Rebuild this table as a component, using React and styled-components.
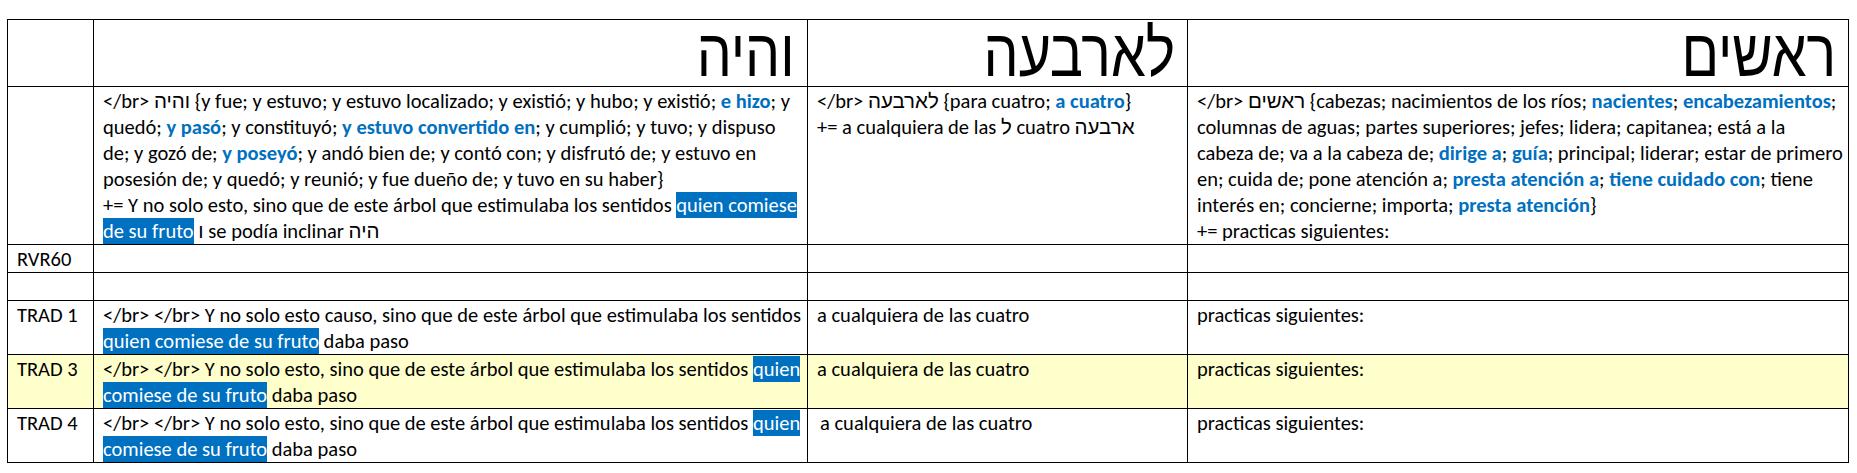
import React from 'react'
import styled, { createGlobalStyle } from 'styled-components'

const GlobalStyle = createGlobalStyle`
  body {
    margin: 0;
    background: #ffffff;
    font-family: Calibri, Carlito, Lato, 'Liberation Sans', sans-serif;
  }
`

const Page = styled.div`
  padding: 19px 0 0 7px;
`

const Sheet = styled.table`
  border-collapse: collapse;
  table-layout: fixed;
  width: 1841px;
  font-size: 20.5px;
  line-height: 26px;
  color: #000000;
`

const HeadCell = styled.th`
  height: 66px;
  padding: 0 12px 0 8px;
  border: 1px solid #000000;
  text-align: right;
  vertical-align: bottom;
  font-family: 'Liberation Sans', 'DejaVu Sans', sans-serif;
  font-weight: normal;
  font-size: 66px;
  line-height: 66px;
`

// the Hebrew face in the reference is narrower than Arial's
const HeadWord = styled.span`
  display: inline-block;
  transform: scaleX(0.84);
  transform-origin: right center;
`

const Row = styled.tr`
  background: ${(p) => p.$bg || 'transparent'};
`

const Cell = styled.td`
  padding: 1px 6px 0 ${(p) => p.$indent || 9}px;
  border: 1px solid #000000;
  vertical-align: top;
  white-space: nowrap;
  overflow: hidden;
`

const Line = styled.div`
  height: 26px;
`

const Blue = styled.b`
  color: #0070c0;
  font-weight: 700;
`

const Mark = styled.span`
  background: #0070c0;
  color: #ffffff;
`

// **bold blue** and [[highlighted]] markers
const Rich = ({ text }) =>
  text.split(/(\*\*.+?\*\*|\[\[.+?\]\])/).map((part, i) => {
    if (part.startsWith('**')) return <Blue key={i}>{part.slice(2, -2)}</Blue>
    if (part.startsWith('[[')) return <Mark key={i}>{part.slice(2, -2)}</Mark>
    return <React.Fragment key={i}>{part}</React.Fragment>
  })

const Lines = ({ lines }) =>
  lines.length ? lines.map((l, i) => <Line key={i}><Rich text={l} /></Line>) : <Line>{'\u00a0'}</Line>

const heads = ['והיה', 'לארבעה', 'ראשים']

const defs = [
  [
    '</br> והיה {y fue; y estuvo; y estuvo localizado; y existió; y hubo; y existió; **e hizo**; y',
    'quedó; **y pasó**; y constituyó; **y estuvo convertido en**; y cumplió; y tuvo; y dispuso',
    'de; y gozó de; **y poseyó**; y andó bien de; y contó con; y disfrutó de; y estuvo en',
    'posesión de; y quedó; y reunió; y fue dueño de; y tuvo en su haber}',
    '+= Y no solo esto, sino que de este árbol que estimulaba los sentidos [[quien comiese]]',
    '[[de su fruto]] ו se podía inclinar היה',
  ],
  [
    '</br> לארבעה {para cuatro; **a cuatro**}',
    '+= a cualquiera de las ל cuatro ארבעה',
  ],
  [
    '</br> ראשים {cabezas; nacimientos de los ríos; **nacientes**; **encabezamientos**;',
    'columnas de aguas; partes superiores; jefes; lidera; capitanea; está a la',
    'cabeza de; va a la cabeza de; **dirige a**; **guía**; principal; liderar; estar de primero',
    'en; cuida de; pone atención a; **presta atención a**; **tiene cuidado con**; tiene',
    'interés en; concierne; importa; **presta atención**}',
    '+= practicas siguientes:',
  ],
]

const trads = [
  {
    label: 'TRAD 1',
    cells: [
      [
        '</br> </br> Y no solo esto causo, sino que de este árbol que estimulaba los sentidos',
        '[[quien comiese de su fruto]] daba paso',
      ],
      ['a cualquiera de las cuatro'],
      ['practicas siguientes:'],
    ],
  },
  {
    label: 'TRAD 3',
    bg: '#ffffcc',
    cells: [
      [
        '</br> </br> Y no solo esto, sino que de este árbol que estimulaba los sentidos [[quien]]',
        '[[comiese de su fruto]] daba paso',
      ],
      ['a cualquiera de las cuatro'],
      ['practicas siguientes:'],
    ],
  },
  {
    label: 'TRAD 4',
    cells: [
      [
        '</br> </br> Y no solo esto, sino que de este árbol que estimulaba los sentidos [[quien]]',
        '[[comiese de su fruto]] daba paso',
      ],
      ['a cualquiera de las cuatro'],
      ['practicas siguientes:'],
    ],
    indent: 12,
  },
]

const App = () => (
  <Page>
    <GlobalStyle />
    <Sheet>
      <colgroup>
        <col style={{ width: 86 }} />
        <col style={{ width: 714 }} />
        <col style={{ width: 380 }} />
        <col style={{ width: 661 }} />
      </colgroup>
      <tbody>
        <Row>
          <HeadCell />
          {heads.map((h) => (
            <HeadCell key={h}>
              <HeadWord>{h}</HeadWord>
            </HeadCell>
          ))}
        </Row>
        <Row>
          <Cell><Lines lines={[]} /></Cell>
          {defs.map((d, i) => (
            <Cell key={i}><Lines lines={d} /></Cell>
          ))}
        </Row>
        <Row>
          <Cell><Lines lines={['RVR60']} /></Cell>
          <Cell><Lines lines={[]} /></Cell>
          <Cell><Lines lines={[]} /></Cell>
          <Cell><Lines lines={[]} /></Cell>
        </Row>
        <Row>
          <Cell><Lines lines={[]} /></Cell>
          <Cell><Lines lines={[]} /></Cell>
          <Cell><Lines lines={[]} /></Cell>
          <Cell><Lines lines={[]} /></Cell>
        </Row>
        {trads.map((t) => (
          <Row key={t.label} $bg={t.bg}>
            <Cell><Lines lines={[t.label]} /></Cell>
            <Cell><Lines lines={t.cells[0]} /></Cell>
            <Cell $indent={t.indent}><Lines lines={t.cells[1]} /></Cell>
            <Cell><Lines lines={t.cells[2]} /></Cell>
          </Row>
        ))}
      </tbody>
    </Sheet>
  </Page>
)

export default App
